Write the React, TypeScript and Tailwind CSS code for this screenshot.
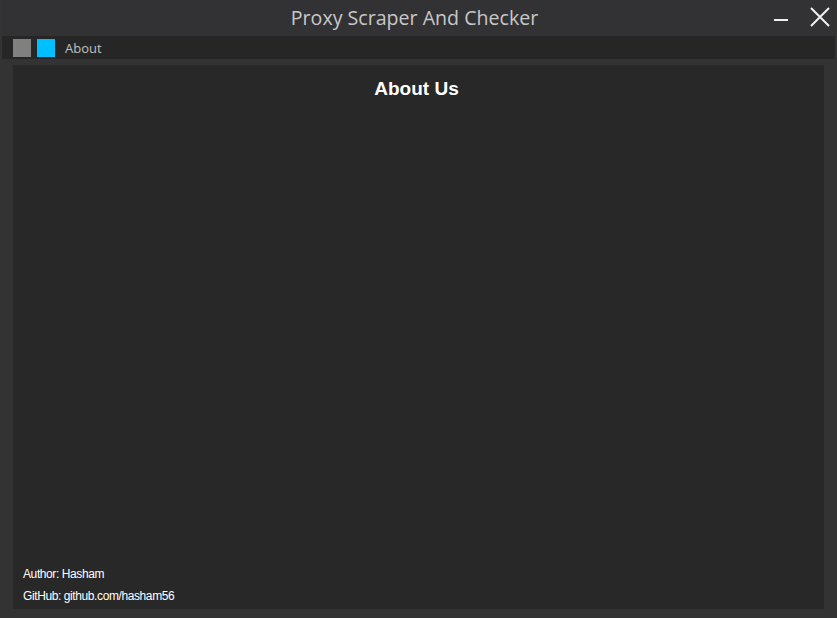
import React from 'react';

export default function App() {
  return (
    <div className="flex h-[618px] w-[837px] flex-col overflow-hidden bg-[#333333] pl-[2px] pr-[2px]" style={{ fontFamily: '"Open Sans", "Noto Sans", sans-serif' }}>
      {/* title bar */}
      <div className="relative flex h-[36px] shrink-0 items-center justify-center bg-[#323234] pr-[8px]">
        <span className="text-[19.6px] leading-none text-[#c8c8c8]">Proxy Scraper And Checker</span>
        <div className="absolute right-[4px] top-[6px] flex items-center gap-[20px]">
          <svg width="16" height="20" viewBox="0 0 16 20">
            <rect x="1" y="12" width="14" height="2" fill="#f0f0f0" />
          </svg>
          <svg width="22" height="22" viewBox="0 0 22 22">
            <path d="M2 2 L20 20 M20 2 L2 20" stroke="#f0f0f0" strokeWidth="2" />
          </svg>
        </div>
      </div>

      {/* menu bar */}
      <div className="flex h-[23px] shrink-0 items-center bg-[#262626] pl-[11px]">
        <div className="h-[18px] w-[18px] bg-[#808080]" />
        <div className="ml-[6px] h-[18px] w-[18px] bg-[#00bfff]" />
        <span className="ml-[10px] mt-[2px] text-[13px] leading-none text-[#c0c0c0]">About</span>
      </div>

      {/* content */}
      <div className="flex flex-1 px-[11px] pb-[9px] pt-[6px]">
        <div className="flex flex-1 flex-col bg-[#282828]">
          <h1 className="pr-[4px] pt-[12px] text-center text-[19px] font-bold leading-[24px] text-white" style={{ fontFamily: '"Liberation Sans", Arial, sans-serif' }}>
            About Us
          </h1>
          <div className="flex-1" />
          <div className="flex flex-col gap-[10px] pb-[7px] pl-[10px] text-[12px] leading-[12px] tracking-[-0.4px] text-white" style={{ fontFamily: '"Liberation Sans", Arial, sans-serif' }}>
            <span>Author: Hasham</span>
            <span>GitHub: github.com/hasham56</span>
          </div>
        </div>
      </div>
    </div>
  );
}
